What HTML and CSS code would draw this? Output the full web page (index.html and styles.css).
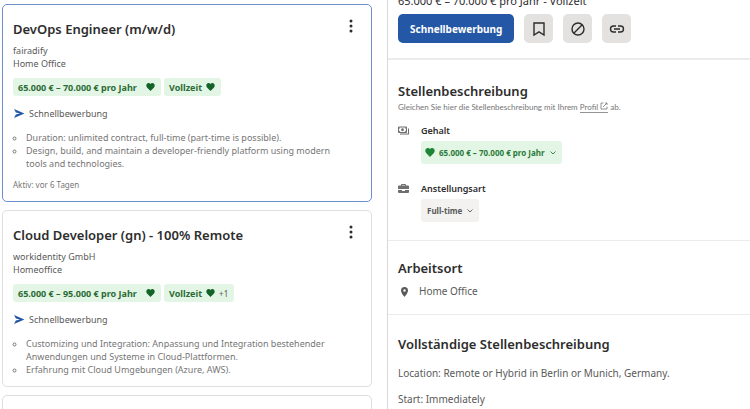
FILE: index.html
```html
<!DOCTYPE html>
<html lang="de">
<head>
    <meta charset="UTF-8">
    <meta name="viewport" content="width=device-width, initial-scale=1.0">
    <title>Jobs: DevOps Engineer (m/w/d)</title>
    <link rel="stylesheet" href="styles.css">
</head>
<body>
    <svg class="sprite" aria-hidden="true">
        <symbol id="heart" viewBox="0 0 24 22"><path d="M12 22 3 13C-2 7 1 0 7 0c2 0 4 1 5 3 1-2 3-3 5-3 6 0 9 7 4 13z"/></symbol>
        <symbol id="send" viewBox="0 0 24 20"><path d="M1 0 24 10 1 20l4-8 9-2-9-2z"/></symbol>
        <symbol id="dots" viewBox="0 0 4 14"><circle cx="2" cy="2" r="1.5"/><circle cx="2" cy="7" r="1.5"/><circle cx="2" cy="12" r="1.5"/></symbol>
        <symbol id="chevron" viewBox="0 0 12 12"><path d="m1 3 5 5 5-5" fill="none" stroke="currentColor" stroke-width="1.8"/></symbol>
    </svg>

    <div class="page">
        <main class="job-list">
            <article class="card active">
                <div class="card-head">
                    <h2>DevOps Engineer (m/w/d)</h2>
                    <button class="menu" aria-label="Menü"><svg><use href="#dots"/></svg></button>
                </div>
                <p class="company">fairadify<br>Home Office</p>
                <div class="chips">
                    <span class="chip pay">65.000 € – 70.000 € pro Jahr <svg><use href="#heart"/></svg></span>
                    <span class="chip">Vollzeit <svg><use href="#heart"/></svg></span>
                </div>
                <p class="quick"><svg><use href="#send"/></svg>Schnellbewerbung</p>
                <ul class="snippet">
                    <li>Duration: unlimited contract, full-time (part-time is possible).</li>
                    <li>Design, build, and maintain a developer-friendly platform using modern tools and technologies.</li>
                </ul>
                <p class="date">Aktiv: vor 6 Tagen</p>
            </article>

            <article class="card">
                <div class="card-head">
                    <h2>Cloud Developer (gn) - 100% Remote</h2>
                    <button class="menu" aria-label="Menü"><svg><use href="#dots"/></svg></button>
                </div>
                <p class="company">workidentity GmbH<br>Homeoffice</p>
                <div class="chips">
                    <span class="chip pay">65.000 € – 95.000 € pro Jahr <svg><use href="#heart"/></svg></span>
                    <span class="chip">Vollzeit <svg><use href="#heart"/></svg><small>+1</small></span>
                </div>
                <p class="quick"><svg><use href="#send"/></svg>Schnellbewerbung</p>
                <ul class="snippet">
                    <li>Customizing und Integration: Anpassung und Integration bestehender Anwendungen und Systeme in Cloud-Plattformen.</li>
                    <li>Erfahrung mit Cloud Umgebungen (Azure, AWS).</li>
                </ul>
            </article>

            <article class="card next"></article>
        </main>

        <aside class="detail">
            <header class="detail-head">
                <p class="salary">65.000 € – 70.000 € pro Jahr - Vollzeit</p>
                <div class="actions">
                    <button class="apply">Schnellbewerbung</button>
                    <button class="icon-btn" aria-label="Job speichern">
                        <svg viewBox="0 0 16 16"><path d="M3 2h10v12L8 10.8 3 14z"/></svg>
                    </button>
                    <button class="icon-btn" aria-label="Nicht interessiert">
                        <svg viewBox="0 0 16 16"><circle cx="8" cy="8" r="6"/><path d="m3.8 12.2 8.4-8.4"/></svg>
                    </button>
                    <button class="icon-btn" aria-label="Link kopieren">
                        <svg viewBox="0 0 16 16"><path d="M7 5H4.500a3 3 0 0 0 0 6H7M9 5h2.500a3 3 0 0 1 0 6H9M5 8h6"/></svg>
                    </button>
                </div>
            </header>

            <section class="block">
                <h2>Stellenbeschreibung</h2>
                <p class="hint">Gleichen Sie hier die Stellenbeschreibung mit Ihrem <a href="#">Profil <svg viewBox="0 0 16 16"><path d="M7 2H2v12h12V9M10 2h4v4M14 2 6 10"/></svg></a> ab.</p>
                <div class="attr">
                    <svg class="attr-icon" viewBox="0 0 22 18"><path d="M1 2h16v11H1z" fill="none" stroke="currentColor" stroke-width="2"/><circle cx="9" cy="7.500" r="2.800"/><path d="M2 3h3L2 6zM16 3v3l-3-3zM2 12V9l3 3zM16 12h-3l3-3zM20 5h2v12H4v-2h16z"/></svg>
                    <div>
                        <h3>Gehalt</h3>
                        <button class="tag match"><svg class="tag-heart"><use href="#heart"/></svg>65.000 € – 70.000 € pro Jahr<svg class="tag-chevron"><use href="#chevron"/></svg></button>
                    </div>
                </div>
                <div class="attr">
                    <svg class="attr-icon" viewBox="0 0 22 18"><path fill-rule="evenodd" d="M6 3V2q0-2 2-2h6q2 0 2 2v1h4q2 0 2 2v5H0V5q0-2 2-2zm2 0h6V2H8zM0 12h8v2h6v-2h8v4q0 2-2 2H2q-2 0-2-2z"/></svg>
                    <div>
                        <h3>Anstellungsart</h3>
                        <button class="tag">Full-time<svg class="tag-chevron"><use href="#chevron"/></svg></button>
                    </div>
                </div>
            </section>

            <section class="block location">
                <h2>Arbeitsort</h2>
                <p class="place"><svg viewBox="0 0 14 20"><path fill-rule="evenodd" d="M7 0a7 7 0 0 1 7 7c0 5-7 13-7 13S0 12 0 7a7 7 0 0 1 7-7zm0 4.500a2.500 2.500 0 1 0 0 5 2.500 2.500 0 0 0 0-5z"/></svg>Home Office</p>
            </section>

            <section class="block full">
                <h2>Vollständige Stellenbeschreibung</h2>
                <p>Location: Remote or Hybrid in Berlin or Munich, Germany.</p>
                <p>Start: Immediately</p>
            </section>
        </aside>
    </div>
</body>
</html>
```
FILE: styles.css
```css
* {
    box-sizing: border-box;
}
body {
    margin: 0;
    background-color: #fff;
    color: #595959;
    font-family: "Noto Sans", "Open Sans", sans-serif;
    font-size: 9px;
    line-height: 13px;
}
h2, h3, p, ul {
    margin: 0;
    padding: 0;
}
h2, h3 {
    color: #2d2d2d;
    font-weight: 600;
}
h2 {
    font-size: 13px;
    line-height: 20px;
}
button {
    border: 0;
    font-family: inherit;
    cursor: pointer;
}
svg {
    fill: currentColor;
}
.sprite {
    display: none;
}
.page {
    display: grid;
    grid-template-columns: 387fr 363fr;
    height: 100vh;
    overflow: hidden;
}
.job-list {
    display: flex;
    flex-direction: column;
    gap: 8px;
    padding: 4px 15px 0 2px;
    overflow: hidden;
}
.card {
    flex-shrink: 0;
    padding: 14px 10px 10px;
    border: 1px solid #dedede;
    border-radius: 5px;
}
.card.active {
    border-color: #6b8fcb;
}
.card.next {
    min-height: 120px;
}
.card-head {
    display: flex;
    justify-content: space-between;
    margin-bottom: 5px;
}
.menu {
    display: flex;
    width: 20px;
    height: 14px;
    padding: 0;
    justify-content: center;
    background: none;
    color: #2d2d2d;
}
.menu svg {
    width: 4px;
    height: 14px;
}
.chips {
    display: flex;
    gap: 3px;
    margin-top: 8px;
}
.chip {
    display: flex;
    align-items: center;
    justify-content: space-between;
    gap: 4px;
    height: 18px;
    padding: 0 6px 0 5px;
    border-radius: 3px;
    background-color: #e3f6e5;
    color: #2b6b35;
    font-weight: 700;
}
.chip.pay {
    min-width: 148px;
}
.chip svg {
    width: 9px;
    height: 8px;
    color: #14642a;
}
.chip small {
    color: #595959;
    font-size: 8px;
    font-weight: 400;
}
.quick {
    display: flex;
    align-items: center;
    gap: 4px;
    height: 14px;
    margin-top: 10px;
}
.quick svg {
    width: 12px;
    height: 9px;
    color: #2557a7;
}
.snippet {
    margin-top: 11px;
    padding: 0 20px 0 13px;
    color: #767676;
    list-style: circle;
}
.date {
    margin-top: 9px;
    color: #767676;
    font-size: 8px;
    line-height: 12px;
}
.detail {
    border-left: 1px solid #d8d8d8;
    overflow: hidden;
}
.detail-head {
    padding: 0 10px 15px;
    border-bottom: 2px solid #ebebeb;
}
.salary {
    margin-top: -6px;
    color: #2d2d2d;
    font-size: 11px;
    line-height: 14px;
}
.actions {
    display: flex;
    gap: 10px;
    padding-top: 6px;
}
.apply {
    height: 29px;
    padding: 0 12px;
    border-radius: 5px;
    background-color: #2557a7;
    color: #fff;
    font-size: 10px;
    font-weight: 700;
}
.icon-btn {
    display: grid;
    place-items: center;
    width: 29px;
    height: 29px;
    padding: 0;
    border-radius: 5px;
    background-color: #e4e2e0;
    color: #2d2d2d;
}
.icon-btn svg {
    width: 16px;
    height: 16px;
    fill: none;
    stroke: currentColor;
    stroke-width: 1.4;
}
.block {
    padding: 21px 10px 18px;
    border-bottom: 1px solid #ebebeb;
}
.hint {
    color: #767676;
    font-family: Lato, "Noto Sans", sans-serif;
    font-size: 8px;
    line-height: 12px;
}
.hint a {
    border-bottom: 1px solid #949494;
    color: inherit;
    text-decoration: none;
}
.hint svg {
    width: 8px;
    height: 8px;
    fill: none;
    stroke: currentColor;
    stroke-width: 1.6;
}
.attr {
    display: flex;
    gap: 12px;
    margin-top: 11px;
}
.attr + .attr {
    margin-top: 18px;
}
.attr-icon {
    width: 11px;
    height: 9px;
    margin-top: 2px;
    color: #6f6f6f;
}
.attr h3 {
    font-size: 9px;
    line-height: 14px;
}
.tag {
    display: flex;
    align-items: center;
    height: 23px;
    margin-top: 3px;
    padding: 0 6px;
    border-radius: 3px;
    background-color: #f3f2f1;
    color: #595959;
    font-size: 8px;
    font-weight: 700;
}
.tag.match {
    padding-left: 4px;
    background-color: #e3f6e5;
    color: #2b7a3a;
}
.tag-heart {
    width: 10px;
    height: 9px;
    margin-right: 4px;
    color: #1d8636;
}
.tag-chevron {
    width: 6px;
    height: 6px;
    margin-left: 5px;
}
.location {
    padding: 17px 10px 16px;
}
.place {
    display: flex;
    align-items: center;
    gap: 11px;
    margin-top: 7px;
    padding-left: 3px;
    font-size: 10px;
}
.place svg {
    width: 7px;
    height: 10px;
}
.full {
    padding-top: 19px;
}
.full p {
    margin-top: 13px;
    font-size: 10px;
}
```
